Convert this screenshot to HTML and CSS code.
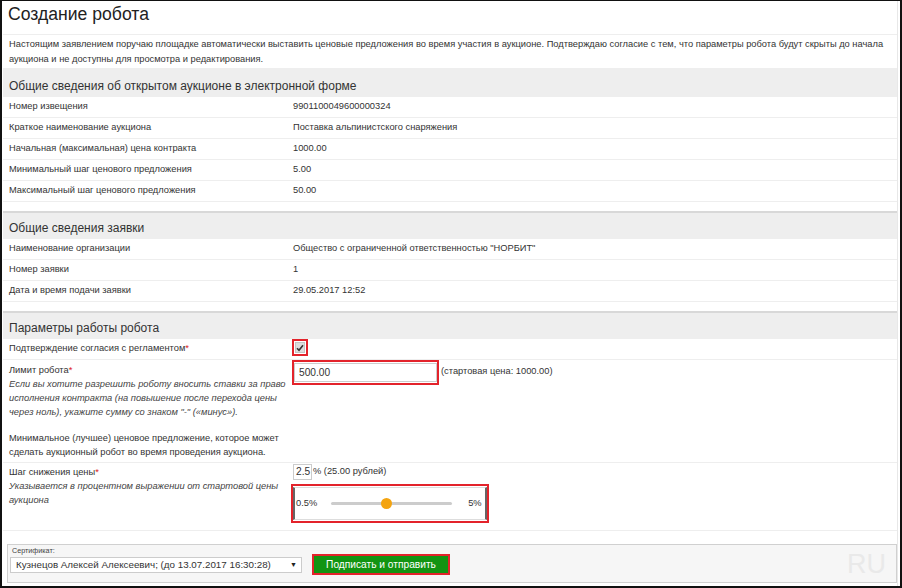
FILE: index.html
```html
<!DOCTYPE html>
<html lang="ru">
<head>
<meta charset="utf-8">
<title>Создание робота</title>
<link rel="stylesheet" href="styles.css">
</head>
<body>
<div class="frame">
  <div class="page">
    <h1 class="title">Создание робота</h1>
    <p class="intro">Настоящим заявлением поручаю площадке автоматически выставить ценовые предложения во время участия в аукционе. Подтверждаю согласие с тем, что параметры робота будут скрыты до начала аукциона и не доступны для просмотра и редактирования.</p>

    <section class="sec sec-first">
      <h2 class="sec-head">Общие сведения об открытом аукционе в электронной форме</h2>
      <div class="row"><div class="lbl">Номер извещения</div><div class="val">9901100049600000324</div></div>
      <div class="row"><div class="lbl">Краткое наименование аукциона</div><div class="val">Поставка альпинистского снаряжения</div></div>
      <div class="row"><div class="lbl">Начальная (максимальная) цена контракта</div><div class="val">1000.00</div></div>
      <div class="row"><div class="lbl">Минимальный шаг ценового предложения</div><div class="val">5.00</div></div>
      <div class="row"><div class="lbl">Максимальный шаг ценового предложения</div><div class="val">50.00</div></div>
    </section>

    <section class="sec">
      <h2 class="sec-head">Общие сведения заявки</h2>
      <div class="row"><div class="lbl">Наименование организации</div><div class="val">Общество с ограниченной ответственностью "НОРБИТ"</div></div>
      <div class="row"><div class="lbl">Номер заявки</div><div class="val">1</div></div>
      <div class="row"><div class="lbl">Дата и время подачи заявки</div><div class="val">29.05.2017 12:52</div></div>
    </section>

    <section class="sec sec-last">
      <h2 class="sec-head">Параметры работы робота</h2>
      <div class="row row-check">
        <div class="lbl">Подтверждение согласия с регламентом<span class="req">*</span></div>
        <div class="val val-tight">
          <span class="mark mark-check">
            <span class="checkbox"><svg width="8" height="8" viewBox="0 0 8 8"><path d="M1 4.3 L3 6.3 L7 1.2" fill="none" stroke="#333" stroke-width="1.6"/></svg></span>
          </span>
        </div>
      </div>
      <div class="row row-tall">
        <div class="lbl">
          <div>Лимит робота<span class="req">*</span></div>
          <div class="hint">Если вы хотите разрешить роботу вносить ставки за право исполнения контракта (на повышение после перехода цены через ноль), укажите сумму со знаком "-" («минус»).</div>
          <div class="note">Минимальное (лучшее) ценовое предложение, которое может сделать аукционный робот во время проведения аукциона.</div>
        </div>
        <div class="val val-tight inline">
          <span class="mark mark-input"><span class="input wide">500.00</span></span>
          <span class="aside">(стартовая цена: 1000.00)</span>
        </div>
      </div>
      <div class="row row-step">
        <div class="lbl">
          <div>Шаг снижения цены<span class="req">*</span></div>
          <div class="hint">Указывается в процентном выражении от стартовой цены аукциона</div>
        </div>
        <div class="val val-step">
          <div class="inline step-line"><span class="input small">2.5</span><span>% (25.00 рублей)</span></div>
          <div class="mark mark-slider">
            <div class="slider">
              <span>0.5%</span>
              <span class="track"><span class="knob"></span></span>
              <span>5%</span>
            </div>
          </div>
        </div>
      </div>
    </section>

    <footer class="foot">
      <div class="cert">
        <div class="cert-label">Сертификат:</div>
        <div class="select"><span>Кузнецов Алексей Алексеевич; (до 13.07.2017 16:30:28)</span><span class="arrow">▼</span></div>
      </div>
      <div class="mark mark-btn"><button class="btn" type="button">Подписать и отправить</button></div>
      <div class="lang">RU</div>
    </footer>
  </div>
</div>
</body>
</html>
```

FILE: styles.css
```css
* { box-sizing: border-box; }
html, body { margin: 0; padding: 0; background: #fff; }
body {
  font-family: "Liberation Sans", Arial, sans-serif;
  color: #333;
  font-size: 9.3px;
}
.frame {
  width: 902px;
  height: 588px;
  border-style: solid;
  border-color: #111;
  border-width: 1px 2px 2px 2px;
  padding: 0 2px 0 1px;
  overflow: hidden;
}
.page {
  height: 100%;
  border-right: 1px solid #e8e8e8;
  display: flex;
  flex-direction: column;
}
.title {
  margin: 0;
  font-weight: normal;
  font-size: 17.6px;
  line-height: 22px;
  padding: 2px 5px 9px;
  border-bottom: 1px solid #eee;
  color: #222;
}
.intro {
  margin: 0;
  line-height: 15px;
  padding: 2px 6px 1px;
  border-bottom: 1px solid #eee;
}
.sec {
  border-top: 2px solid #d8d8d8;
  margin-bottom: 9px;
}
.sec-first { border-top-color: #eee; }
.sec-last { margin-bottom: 0; }
.sec-head {
  margin: 0;
  background: #eee;
  font-weight: normal;
  font-size: 12px;
  line-height: 16px;
  padding: 7px 6px 3px;
  color: #333;
}
.row {
  display: grid;
  grid-template-columns: 290px 1fr;
  align-items: start;
  border-bottom: 1px solid #eee;
}
.lbl { padding: 2px 4px 3px 6px; line-height: 15px; }
.val { padding: 2px 0 3px; line-height: 15px; }
.val-tight { padding: 0; }
.val-step { padding: 0 0 7px; }
.row-check .lbl { padding-top: 2px; padding-bottom: 3px; }
.row-tall .lbl, .row-step .lbl { line-height: 14px; padding-top: 3px; padding-bottom: 3px; }
.row-step .lbl { padding-top: 2px; padding-bottom: 9px; }
.hint { font-style: italic; color: #444; }
.note { margin-top: 12px; }
.req { color: #d22; }
.inline { display: flex; align-items: center; }
.mark { border: 2px solid #e3232b; display: inline-block; }
.mark-check { margin-left: -1px; padding: 1px; line-height: 0; }
.checkbox {
  display: inline-block;
  width: 10px;
  height: 11px;
  background: #ddd;
  border: 1px solid #c4c4c4;
  line-height: 0;
  padding: 1px 0 0 0;
}
.mark-input { margin-left: -1px; padding: 1px 0; line-height: 0; }
.input {
  display: inline-block;
  border: 1px solid #ccc;
  background: #fff;
  font-size: 10.2px;
  color: #333;
}
.wide { width: 143px; height: 19px; line-height: 17px; padding-left: 4px; }
.aside { margin-left: 2px; margin-top: -3px; }
.step-line { height: 21px; padding-top: 1px; align-items: flex-start; }
.small { width: 19px; height: 16px; line-height: 14px; padding-left: 2px; margin-right: 1px; }
.mark-slider { margin-left: -2px; padding: 1px 0; display: block; width: 198px; }
.slider {
  display: flex;
  align-items: center;
  height: 33px;
  border-top: 1px solid #ddd;
  border-bottom: 1px solid #ddd;
  border-left: 2px solid #666;
  border-right: 2px solid #666;
  padding: 0 2px 0 1px;
}
.track {
  position: relative;
  display: block;
  height: 3px;
  background: #ccc;
  border-radius: 2px;
  width: 121px;
  margin: 0 16px 0 14px;
}
.knob {
  position: absolute;
  left: 50px;
  top: -4px;
  width: 11px;
  height: 11px;
  border-radius: 50%;
  background: #f4a410;
}
.foot {
  margin: 13px 0 3px 4px;
  flex: 1;
  border: 1px solid #d0d0d0;
  background: #f6f6f6;
  display: flex;
  align-items: flex-end;
  padding: 0 0 9px 2px;
}
.cert { width: 292px; }
.cert-label { font-size: 7.2px; line-height: 9px; padding-left: 2px; margin-bottom: 2px; color: #444; }
.select {
  height: 16px;
  border: 1px solid #ccc;
  background: #fff;
  font-size: 9.8px;
  line-height: 14px;
  display: flex;
  justify-content: space-between;
  padding: 0 4px 0 5px;
  color: #333;
}
.arrow { font-size: 7px; color: #222; }
.mark-btn { margin: 0 0 -2px 10px; line-height: 0; }
.btn {
  display: block;
  width: 134px;
  height: 17px;
  border: 0;
  background: #129412;
  color: #fff;
  font-family: "Liberation Sans", Arial, sans-serif;
  font-size: 10.2px;
  padding: 0;
}
.lang {
  margin-left: auto;
  margin-right: 10px;
  margin-bottom: -6px;
  font-size: 27px;
  line-height: 30px;
  color: #e9e9e9;
}
```
